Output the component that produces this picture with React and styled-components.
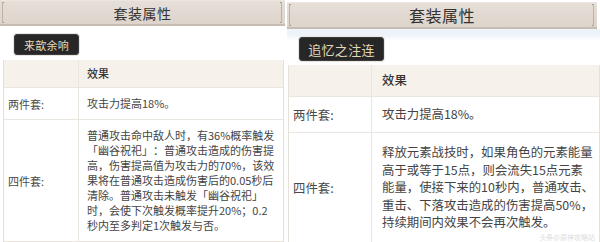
import React from 'react';
import styled, { createGlobalStyle } from 'styled-components';

const Global = createGlobalStyle`
  html, body { margin: 0; padding: 0; background: #ffffff; }
  body {
    font-family: "Noto Sans CJK SC", "Noto Sans", sans-serif;
    color: #3b3b3b;
    overflow: hidden;
    text-spacing-trim: space-all;
  }
`;

const S = {
  sm: {
    barTop: 0, barH: 28, barRight: 0, title: 14,
    btnPad: '8px 0 5px 14px', btnW: 65, btnH: 21, btnFont: 11,
    tblLeft: 3, tblRight: 1,
    labelW: 75, labelPad: 4, font: 11, lh: 15,
    headH: 27, row1H: 31, cellPad: '8px 7px 8px 8px',
  },
  lg: {
    barTop: 2, barH: 32, barRight: 3, title: 16,
    btnPad: '8px 0 4px 12px', btnW: 85, btnH: 24, btnFont: 13,
    tblLeft: 1, tblRight: 0,
    labelW: 83, labelPad: 4, font: 12.4, lh: 17.6,
    headH: 31, row1H: 35, cellPad: '11px 4px 11px 10px',
  },
};

const Page = styled.div`
  display: flex;
  gap: 2px;
  width: 600px;
  height: 242px;
  overflow: hidden;
`;

const Panel = styled.section`
  position: relative;
  display: flex;
  flex-direction: column;
  flex: ${p => (p.$size === 'sm' ? '0 0 285px' : '1 1 auto')};
  background: #ffffff;
`;

const TitleBar = styled.header`
  position: relative;
  box-sizing: border-box;
  margin-top: ${p => S[p.$size].barTop}px;
  margin-right: ${p => S[p.$size].barRight}px;
  height: ${p => S[p.$size].barH}px;
  border-top: 1px solid #ece6e0;
  border-bottom: 2px solid #c7bcb2;
  background: linear-gradient(#e6dfd8, #ddd4cb);
  display: flex;
  align-items: center;
  justify-content: center;
  font-size: ${p => S[p.$size].title}px;
  color: #333;
  letter-spacing: 0.5px;

  &::before {
    content: '';
    position: absolute;
    top: 1px;
    bottom: 1px;
    left: 2px;
    right: 3px;
    border-left: 1px solid #bdb2a8;
    border-right: 1px solid #bdb2a8;
    background:
      radial-gradient(circle, #9e948a 1.3px, transparent 1.6px) -2px -2px / 4px 4px no-repeat,
      radial-gradient(circle, #9e948a 1.3px, transparent 1.6px) -2px calc(100% + 2px) / 4px 4px no-repeat,
      radial-gradient(circle, #9e948a 1.3px, transparent 1.6px) calc(100% + 2px) -2px / 4px 4px no-repeat,
      radial-gradient(circle, #9e948a 1.3px, transparent 1.6px) calc(100% + 2px) calc(100% + 2px) / 4px 4px no-repeat;
    pointer-events: none;
  }
`;

const ButtonRow = styled.div`
  padding: ${p => S[p.$size].btnPad};
  display: flex;
  background: ${p =>
    p.$size === 'lg'
      ? 'linear-gradient(#eef3f9 0, #eef3f9 6px, #ffffff 12px)'
      : '#ffffff'};
`;

const SetButton = styled.button`
  width: ${p => S[p.$size].btnW}px;
  height: ${p => S[p.$size].btnH}px;
  padding: 0;
  border: 1px solid #3c3c3c;
  border-radius: 3px;
  background: #272727;
  color: #e2d9bb;
  font-family: inherit;
  font-size: ${p => S[p.$size].btnFont}px;
  letter-spacing: 0.3px;
  display: flex;
  align-items: center;
  justify-content: center;
  box-shadow: 0 0 0 1px #e9e6e2;
`;

const Table = styled.div`
  margin-left: ${p => S[p.$size].tblLeft}px;
  margin-right: ${p => S[p.$size].tblRight}px;
  border-left: 1px solid #e6e0da;
  border-right: 1px solid #e6e0da;
  display: flex;
  flex-direction: column;
`;

const Row = styled.div`
  display: grid;
  grid-template-columns: ${p => S[p.$size].labelW}px 1fr;
  min-height: ${p => (p.$h ? `${p.$h}px` : 'auto')};
  border-bottom: 1px solid #ebe5df;
  background: ${p => (p.$head ? '#f7f1ec' : '#ffffff')};
`;

const Label = styled.div`
  display: flex;
  align-items: center;
  padding-left: ${p => S[p.$size].labelPad}px;
  border-right: 1px solid #ebe5df;
  font-size: ${p => S[p.$size].font}px;
  color: #4a4a4a;
`;

const Cell = styled.div`
  display: flex;
  align-items: center;
  padding: ${p => (p.$long ? S[p.$size].cellPad : `0 4px 0 ${p.$size === 'sm' ? 8 : 10}px`)};
  font-size: ${p => S[p.$size].font}px;
  line-height: ${p => S[p.$size].lh}px;
  font-weight: ${p => (p.$head ? 500 : 400)};
  color: ${p => (p.$head ? '#333' : '#444')};
`;

const Watermark = styled.span`
  position: absolute;
  right: 5px;
  bottom: 1px;
  font-size: 7px;
  line-height: 8px;
  color: #dedede;
`;

const sets = [
  {
    size: 'sm',
    name: '来歆余响',
    two: '攻击力提高18%。',
    four: '普通攻击命中敌人时，有36%概率触发「幽谷祝祀」：普通攻击造成的伤害提高，伤害提高值为攻击力的70%，该效果将在普通攻击造成伤害后的0.05秒后清除。普通攻击未触发「幽谷祝祀」时，会使下次触发概率提升20%；0.2秒内至多判定1次触发与否。',
  },
  {
    size: 'lg',
    name: '追忆之注连',
    two: '攻击力提高18%。',
    four: '释放元素战技时，如果角色的元素能量高于或等于15点，则会流失15点元素能量，使接下来的10秒内，普通攻击、重击、下落攻击造成的伤害提高50%，持续期间内效果不会再次触发。',
    mark: '头条@原神攻略站',
  },
];

function SetPanel({ set }) {
  const s = set.size;
  return (
    <Panel $size={s}>
      <TitleBar $size={s}>套装属性</TitleBar>
      <ButtonRow $size={s}>
        <SetButton $size={s}>{set.name}</SetButton>
      </ButtonRow>
      <Table $size={s}>
        <Row $size={s} $head $h={S[s].headH}>
          <Label $size={s} />
          <Cell $size={s} $head>效果</Cell>
        </Row>
        <Row $size={s} $h={S[s].row1H}>
          <Label $size={s}>两件套:</Label>
          <Cell $size={s}>{set.two}</Cell>
        </Row>
        <Row $size={s}>
          <Label $size={s}>四件套:</Label>
          <Cell $size={s} $long>{set.four}</Cell>
        </Row>
      </Table>
      {set.mark && <Watermark>{set.mark}</Watermark>}
    </Panel>
  );
}

export default function App() {
  return (
    <>
      <Global />
      <Page>
        {sets.map(set => (
          <SetPanel key={set.name} set={set} />
        ))}
      </Page>
    </>
  );
}
